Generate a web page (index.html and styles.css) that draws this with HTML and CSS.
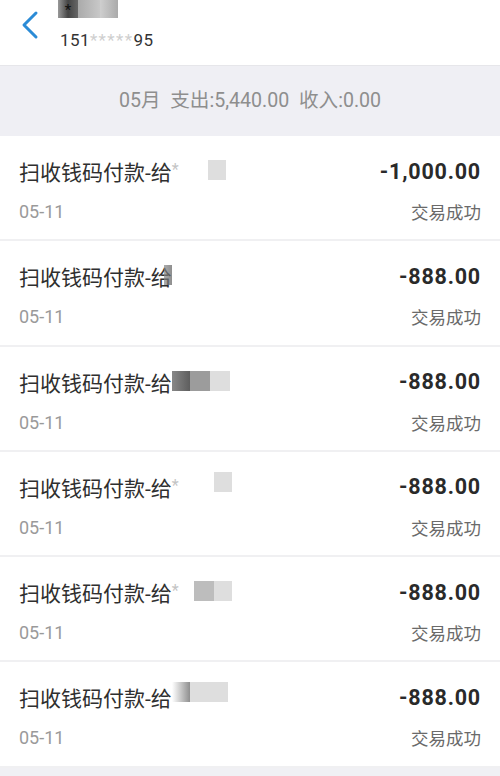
FILE: index.html
```html
<!DOCTYPE html>
<html lang="zh-CN">
<head>
	<meta charset="UTF-8">
	<title>账单</title>
	<meta name="viewport" content="width=device-width, initial-scale=1.0">
	<link rel="stylesheet" href="styles.css">
</head>
<body>

	<div id="header">
		<a class="back" href="#">
			<svg width="20" height="30" viewBox="0 0 20 30"><path d="M16 3 L4 15 L16 27" fill="none" stroke="#2b8bd6" stroke-width="3" stroke-linecap="round" stroke-linejoin="round"/></svg>
		</a>
		<div class="who">
			<div class="name"><span class="m m-dark">*</span><span class="m m-mid"></span><span class="m m-light"></span></div>
			<div class="phone">151<span class="faint">*****</span>95</div>
		</div>
	</div>

	<div id="summary">05月&nbsp;&nbsp;支出:5,440.00&nbsp;&nbsp;收入:0.00</div>

	<div id="list">
		<div class="row">
			<div class="line">
				<span class="title">扫收钱码付款-给<span class="mask"><span class="c w8 faint">*</span><span class="c w28"></span><span class="c w18 g-light"></span></span></span>
				<span class="amount">-1,000.00</span>
			</div>
			<div class="line">
				<span class="date">05-11</span>
				<span class="status">交易成功</span>
			</div>
		</div>
		<div class="row">
			<div class="line">
				<span class="title">扫收钱码付款-给<span class="mask"><span class="c w8 g-dark back-over"></span><span class="c w50"></span></span></span>
				<span class="amount">-888.00</span>
			</div>
			<div class="line">
				<span class="date">05-11</span>
				<span class="status">交易成功</span>
			</div>
		</div>
		<div class="row">
			<div class="line">
				<span class="title">扫收钱码付款-给<span class="mask"><span class="c w18 g-dark"></span><span class="c w20 g-mid"></span><span class="c w20 g-light"></span></span></span>
				<span class="amount">-888.00</span>
			</div>
			<div class="line">
				<span class="date">05-11</span>
				<span class="status">交易成功</span>
			</div>
		</div>
		<div class="row">
			<div class="line">
				<span class="title">扫收钱码付款-给<span class="mask"><span class="c w8 faint">*</span><span class="c w34"></span><span class="c w18 g-light raised"></span></span></span>
				<span class="amount">-888.00</span>
			</div>
			<div class="line">
				<span class="date">05-11</span>
				<span class="status">交易成功</span>
			</div>
		</div>
		<div class="row">
			<div class="line">
				<span class="title">扫收钱码付款-给<span class="mask"><span class="c w8 faint">*</span><span class="c w14"></span><span class="c w20 g-mid2"></span><span class="c w18 g-light"></span></span></span>
				<span class="amount">-888.00</span>
			</div>
			<div class="line">
				<span class="date">05-11</span>
				<span class="status">交易成功</span>
			</div>
		</div>
		<div class="row">
			<div class="line">
				<span class="title">扫收钱码付款-给<span class="mask"><span class="c w18 g-fade raised"></span><span class="c w38 g-light raised"></span></span></span>
				<span class="amount">-888.00</span>
			</div>
			<div class="line">
				<span class="date">05-11</span>
				<span class="status">交易成功</span>
			</div>
		</div>
	</div>

</body>
</html>
```

FILE: styles.css
```css
body {
	background: #f0f0f4;
	color: #333;
	font-family: Roboto, "Noto Sans CJK SC", sans-serif;
	margin: 0;
	padding: 0;
	width: 500px;
}
#header {
	align-items: flex-start;
	background: #fff;
	display: flex;
	height: 65px;
}
#header .back {
	display: block;
	margin: 10px 0 0 20px;
	width: 20px;
	height: 30px;
}
#header .who {
	margin-left: 18px;
}
#header .name {
	display: flex;
	height: 18px;
}
.m {
	display: block;
	height: 18px;
}
.m-dark {
	background: linear-gradient(to right, #999, #444 50%, #666);
	color: #111;
	font-size: 15px;
	line-height: 15px;
	padding-top: 3px;
	box-sizing: border-box;
	text-align: center;
	width: 20px;
}
.m-mid {
	background: linear-gradient(to right, #aaa, #c8c8c8);
	width: 22px;
}
.m-light {
	background: linear-gradient(to right, #cfcfcf, #aaa);
	width: 18px;
}
#header .phone {
	color: #333;
	font-size: 17px;
	letter-spacing: .4px;
	margin: 12px 0 0 2px;
}
#header .phone .faint {
	color: #cfcfcf;
	letter-spacing: 1.4px;
}
#summary {
	background: #efeff4;
	border-top: 1px solid #e6e6ea;
	color: #8e8e8e;
	font-size: 19.6px;
	height: 70px;
	line-height: 70px;
	text-align: center;
}
#list {
	background: #f2f2f4;
}
.row {
	background: #fff;
	border-bottom: 2px solid #f0f0f2;
	box-sizing: border-box;
	display: flex;
	flex-direction: column;
	height: 105.3px;
	padding: 20px 19px 0 19px;
}
.line {
	align-items: center;
	display: flex;
	justify-content: space-between;
}
.line + .line {
	margin-top: 13px;
}
.title {
	align-items: center;
	color: #2f2f2f;
	display: flex;
	font-size: 21px;
	height: 30px;
}
.amount {
	color: #2a2a2a;
	font-size: 21.5px;
	font-weight: bold;
	letter-spacing: .8px;
}
.date {
	color: #9a9a9a;
	font-size: 18px;
}
.status {
	color: #6a6a6a;
	font-size: 17.5px;
}
.mask {
	display: flex;
	align-items: flex-start;
	height: 22px;
}
.c {
	display: block;
	height: 20px;
}
.c.faint {
	color: #c4c4c4;
	font-size: 16px;
	line-height: 20px;
}
.w8 { width: 8px; }
.w14 { width: 14px; }
.w18 { width: 18px; }
.w20 { width: 20px; }
.w28 { width: 28px; }
.w34 { width: 34px; }
.w38 { width: 38px; }
.w50 { width: 50px; }
.g-dark {
	background: linear-gradient(to right, #888, #5e5e5e);
}
.g-mid {
	background: #9c9c9c;
}
.g-mid2 {
	background: #bdbdbd;
}
.g-light {
	background: #dedede;
}
.g-fade {
	background: linear-gradient(to right, #fff, #8f8f8f);
}
.raised {
	margin-top: -4px;
}
.back-over {
	margin-left: -8px;
	opacity: .7;
}
```
